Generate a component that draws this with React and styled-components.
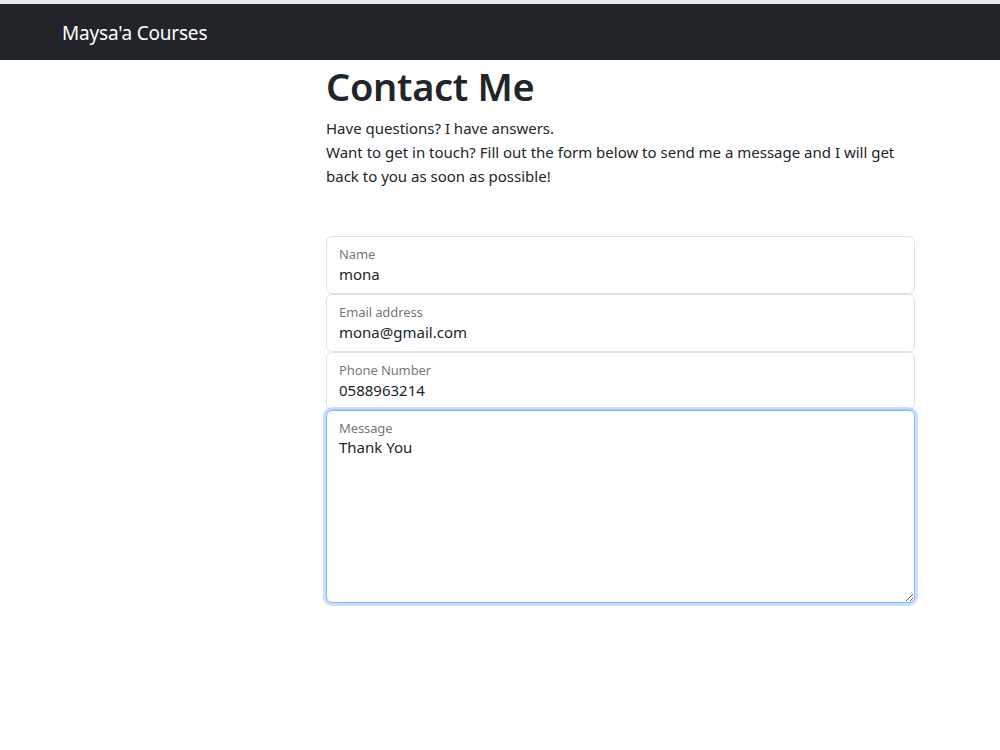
import React from "react";
import styled, { createGlobalStyle } from "styled-components";

const Global = createGlobalStyle`
  html, body { margin: 0; padding: 0; background: #fff; }
  body {
    font-family: "Noto Sans", "Open Sans", sans-serif;
    color: #212529;
    font-size: 15px;
    line-height: 24px;
  }
  * { box-sizing: border-box; }
`;

const Page = styled.div`
  min-height: 750px;
  border-top: 4px solid #e9eaeb;
  background: #fff;
`;

const Navbar = styled.nav`
  height: 56px;
  background: #212529;
  display: flex;
  align-items: center;
  padding: 2px 0 0 62px;
`;

const Brand = styled.a`
  color: #fff;
  font-size: 19px;
  line-height: 30px;
  text-decoration: none;
  letter-spacing: -0.2px;
`;

const Main = styled.main`
  display: flex;
  padding-left: 326px;
`;

const Column = styled.div`
  width: 589px;
  display: flex;
  flex-direction: column;
`;

const Title = styled.h1`
  margin: 2px 0 6px;
  font-size: 38px;
  font-weight: 600;
  line-height: 48px;
  letter-spacing: -0.3px;
`;

const Lead = styled.p`
  margin: 0;
  font-size: 15px;
  line-height: 24px;
`;

const Form = styled.form`
  margin-top: 48px;
  display: flex;
  flex-direction: column;
`;

const Floating = styled.div`
  position: relative;
`;

const Label = styled.label`
  position: absolute;
  top: 10px;
  left: 13px;
  font-size: 13px;
  line-height: 16px;
  color: rgba(33, 37, 41, 0.65);
  pointer-events: none;
  letter-spacing: -0.1px;
`;

const Input = styled.input`
  display: block;
  width: 100%;
  height: 58px;
  padding: 27px 12px 9px;
  font-family: inherit;
  font-size: 15px;
  line-height: 20px;
  color: #212529;
  background: #fff;
  border: 1px solid #dee2e6;
  border-radius: 6px;
  outline: none;
`;

const TextArea = styled.textarea`
  display: block;
  width: 100%;
  height: 193px;
  padding: 26px 12px 8px;
  font-family: inherit;
  font-size: 15px;
  line-height: 20px;
  color: #212529;
  background: #fff;
  border: 1px solid #86b7fe;
  border-radius: 6px;
  box-shadow: 0 0 0 3px rgba(13, 110, 253, 0.22);
  outline: none;
  resize: vertical;
`;

const fields = [
  { id: "name", label: "Name", value: "mona", type: "text" },
  { id: "email", label: "Email address", value: "mona@gmail.com", type: "email" },
  { id: "phone", label: "Phone Number", value: "0588963214", type: "tel" },
];

export default function App() {
  return (
    <>
      <Global />
      <Page>
        <Navbar>
          <Brand href="#">Maysa'a Courses</Brand>
        </Navbar>
        <Main>
          <Column>
            <Title>Contact Me</Title>
            <Lead>
              Have questions? I have answers.
              <br />
              Want to get in touch? Fill out the form below to send me a message and I will get back to you as soon as possible!
            </Lead>
            <Form onSubmit={(e) => e.preventDefault()}>
              {fields.map((f) => (
                <Floating key={f.id}>
                  <Input id={f.id} type={f.type} defaultValue={f.value} />
                  <Label htmlFor={f.id}>{f.label}</Label>
                </Floating>
              ))}
              <Floating>
                <TextArea id="message" defaultValue="Thank You" />
                <Label htmlFor="message">Message</Label>
              </Floating>
            </Form>
          </Column>
        </Main>
      </Page>
    </>
  );
}
